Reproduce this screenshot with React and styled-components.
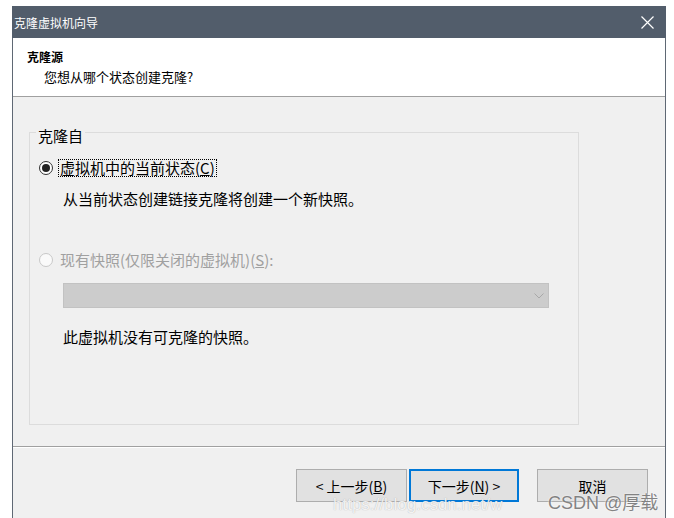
import React from 'react'
import styled, { createGlobalStyle } from 'styled-components'

const GlobalStyle = createGlobalStyle`
  html, body {
    margin: 0;
    padding: 0;
    background: #ffffff;
    font-family: "Noto Sans CJK SC", "Liberation Sans", sans-serif;
    overflow: hidden;
  }
`

const Page = styled.div`
  position: relative;
  width: 674px;
  height: 518px;
  padding: 6px 0 0 12px;
  box-sizing: border-box;
  overflow: hidden;
`

const Window = styled.div`
  width: 654px;
  height: 512px;
  box-sizing: border-box;
  border-left: 1px solid #5f6874;
  border-right: 1px solid #5f6874;
  display: flex;
  flex-direction: column;
  background: #f0f0f0;
`

const TitleBar = styled.div`
  height: 32px;
  margin: 0 -1px;
  background: #525d6b;
  color: #ffffff;
  display: flex;
  align-items: center;
  justify-content: space-between;
  padding: 0 12px 0 2px;
  font-size: 12px;
  flex-shrink: 0;
`

const CloseIcon = styled.svg`
  width: 13px;
  height: 13px;
`

const Header = styled.div`
  height: 59px;
  box-sizing: border-box;
  background: #ffffff;
  border-bottom: 1px solid #a0a0a0;
  padding: 10px 0 0 14px;
  flex-shrink: 0;
`

const HeaderTitle = styled.div`
  font-size: 12px;
  font-weight: 700;
  line-height: 18px;
  color: #000;
`

const HeaderSub = styled.div`
  font-size: 13px;
  line-height: 18px;
  margin: 2px 0 0 17px;
  color: #000;
`

const Body = styled.div`
  height: 349px;
  box-sizing: border-box;
  padding: 21px 0 0 16px;
  flex-shrink: 0;
`

const Group = styled.fieldset`
  margin: 0;
  width: 550px;
  height: 307px;
  box-sizing: border-box;
  padding: 0 9px;
  border: 1px solid #dcdcdc;
  min-width: 0;
  display: flex;
  flex-direction: column;
  align-items: flex-start;
`

const Legend = styled.legend`
  font-size: 15px;
  line-height: 20px;
  padding: 8px 2px 0;
  margin-left: -3px;
  color: #000;
`

const RadioRow = styled.div`
  display: flex;
  align-items: center;
  height: 20px;
  margin-top: ${(p) => p.$top}px;
  color: ${(p) => (p.$disabled ? '#a0a0a0' : '#000')};
  font-size: 15px;
`

const RadioCircle = styled.span`
  width: 14px;
  height: 14px;
  box-sizing: border-box;
  border-radius: 50%;
  border: 1px solid ${(p) => (p.$disabled ? '#c8c8c8' : '#333')};
  background: ${(p) => (p.$disabled ? '#fafafa' : '#fff')};
  margin-right: 5px;
  display: flex;
  align-items: center;
  justify-content: center;
  &::after {
    content: '';
    width: 8px;
    height: 8px;
    border-radius: 50%;
    background: #222;
    display: ${(p) => (p.$checked ? 'block' : 'none')};
  }
`

const RadioLabel = styled.span`
  line-height: 16px;
  padding: 0 1px;
  border: 1px dotted ${(p) => (p.$focus ? '#000' : 'transparent')};
`

const Key = styled.span`
  text-decoration: underline;
`

const Note = styled.div`
  font-size: 15px;
  line-height: 20px;
  color: #000;
  margin: ${(p) => p.$top}px 0 0 24px;
`

const Select = styled.div`
  margin: 13px 0 0 24px;
  width: 486px;
  height: 25px;
  box-sizing: border-box;
  background: #cccccc;
  border: 1px solid #c2c2c2;
  display: flex;
  align-items: center;
  justify-content: flex-end;
  padding-right: 4px;
`

const Chevron = styled.svg`
  width: 10px;
  height: 6px;
`

const Footer = styled.div`
  flex: 1;
  border-top: 1px solid #a0a0a0;
  box-shadow: inset 0 1px 0 #ffffff;
  display: flex;
  justify-content: flex-end;
  align-items: flex-start;
  padding: 22px 17px 0 0;
`

const Button = styled.button`
  width: ${(p) => p.$w || 110}px;
  height: 33px;
  box-sizing: border-box;
  margin-left: ${(p) => p.$gap || 0}px;
  background: #e1e1e1;
  border: ${(p) => (p.$primary ? '2px solid #0078d7' : '1px solid #adadad')};
  font-family: inherit;
  font-size: 14px;
  color: #000;
  padding: 0;
`

const WatermarkUrl = styled.div`
  position: absolute;
  left: 333px;
  top: 495px;
  white-space: nowrap;
  font-family: "Liberation Sans", sans-serif;
  font-size: 17px;
  line-height: 20px;
  color: rgba(255, 255, 255, 0.85);
  text-shadow: 0 0 1px rgba(120, 120, 120, 0.6);
`

const WatermarkBrand = styled.div`
  position: absolute;
  left: 548px;
  top: 490px;
  white-space: nowrap;
  font-size: 18px;
  line-height: 26px;
  color: rgba(110, 110, 110, 0.85);
  text-shadow: 0 0 2px #ffffff;
  font-family: "Liberation Sans", "Noto Sans CJK SC", sans-serif;
`

export default function App() {
  return (
    <Page>
      <GlobalStyle />
      <Window>
        <TitleBar>
          <span>克隆虚拟机向导</span>
          <CloseIcon viewBox="0 0 13 13">
            <path d="M0.5 0.5 L12.5 12.5 M12.5 0.5 L0.5 12.5" stroke="#fff" strokeWidth="1.2" />
          </CloseIcon>
        </TitleBar>
        <Header>
          <HeaderTitle>克隆源</HeaderTitle>
          <HeaderSub>您想从哪个状态创建克隆?</HeaderSub>
        </Header>
        <Body>
          <Group>
            <Legend>克隆自</Legend>
            <RadioRow $top={12}>
              <RadioCircle $checked />
              <RadioLabel $focus>
                虚拟机中的当前状态(<Key>C</Key>)
              </RadioLabel>
            </RadioRow>
            <Note $top={11}>从当前状态创建链接克隆将创建一个新快照。</Note>
            <RadioRow $top={41} $disabled>
              <RadioCircle $disabled />
              <RadioLabel>
                现有快照(仅限关闭的虚拟机)(<Key>S</Key>):
              </RadioLabel>
            </RadioRow>
            <Select>
              <Chevron viewBox="0 0 10 6">
                <path d="M0.5 0.5 L5 5 L9.5 0.5" stroke="#a8a8a8" fill="none" strokeWidth="1" />
              </Chevron>
            </Select>
            <Note $top={19}>此虚拟机没有可克隆的快照。</Note>
          </Group>
        </Body>
        <Footer>
          <Button $w={111}>
            &lt; 上一步(<Key>B</Key>)
          </Button>
          <Button $gap={2} $primary>
            下一步(<Key>N</Key>) &gt;
          </Button>
          <Button $gap={18} $w={111}>取消</Button>
        </Footer>
      </Window>
      <WatermarkUrl>https://blog.csdn.net/w</WatermarkUrl>
      <WatermarkBrand>CSDN @厚载</WatermarkBrand>
    </Page>
  )
}
